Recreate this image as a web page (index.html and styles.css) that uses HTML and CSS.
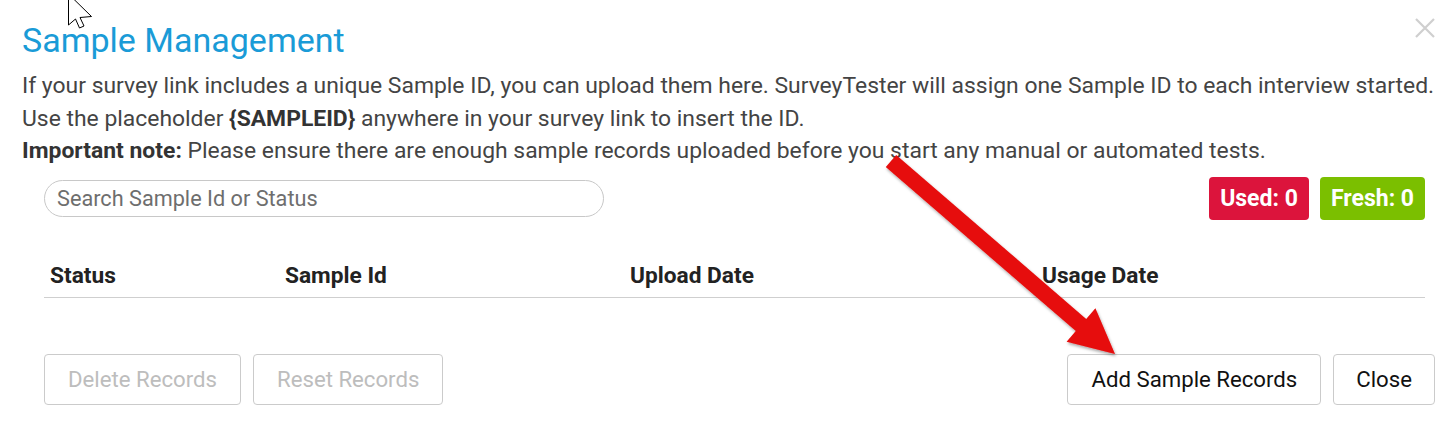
FILE: index.html
```html
<!DOCTYPE html>
<html lang="en">
<head>
<meta charset="utf-8">
<title>Sample Management</title>
<link rel="stylesheet" href="styles.css">
</head>
<body>
<div class="modal">
  <div class="modal-header">
    <h2 class="modal-title">Sample Management</h2>
    <button class="close-x" aria-label="Close">
      <svg width="20" height="20" viewBox="0 0 20 20"><path d="M1 1 L19 19 M19 1 L1 19" stroke="#cfcfcf" stroke-width="2.2" fill="none"/></svg>
    </button>
  </div>
  <div class="intro">
    <p>If your survey link includes a unique Sample ID, you can upload them here. SurveyTester will assign one Sample ID to each interview started.</p>
    <p>Use the placeholder <b>{SAMPLEID}</b> anywhere in your survey link to insert the ID.</p>
    <p><b>Important note:</b> Please ensure there are enough sample records uploaded before you start any manual or automated tests.</p>
  </div>
  <div class="content">
    <div class="toolbar">
      <input class="search" type="text" placeholder="Search Sample Id or Status">
      <div class="badges">
        <span class="badge used">Used: 0</span>
        <span class="badge fresh">Fresh: 0</span>
      </div>
    </div>
    <div class="table-head">
      <div class="col c1">Status</div>
      <div class="col c2">Sample Id</div>
      <div class="col c3">Upload Date</div>
      <div class="col c4">Usage Date</div>
    </div>
  </div>
  <div class="footer">
    <div class="btn-group">
      <button class="btn" disabled>Delete Records</button>
      <button class="btn" disabled>Reset Records</button>
    </div>
    <div class="btn-group">
      <button class="btn">Add Sample Records</button>
      <button class="btn btn-close">Close</button>
    </div>
  </div>
</div>
<svg class="arrow" width="1453" height="427" viewBox="0 0 1453 427">
  <defs>
    <filter id="sh" x="-10%" y="-10%" width="130%" height="130%">
      <feDropShadow dx="1" dy="2" stdDeviation="1.5" flood-color="#000" flood-opacity="0.35"/>
    </filter>
  </defs>
  <polygon filter="url(#sh)" fill="#e60a0a" points="885.8,167.1 896.2,154.9 1086.2,318.9 1095.4,308.3 1115,354 1066.6,341.7 1075.8,331.1"/>
</svg>
<svg class="cursor" width="30" height="40" viewBox="0 0 30 40">
  <polygon points="1.5,0 1.5,31 8.5,25 12.5,34 17,32 13,23.5 24.5,22.5" fill="#fff" stroke="#000" stroke-width="1" stroke-linejoin="miter"/>
</svg>
</body>
</html>
```

FILE: styles.css
```css
* { box-sizing: border-box; }
html, body { margin: 0; padding: 0; background: #fff; }
body {
  font-family: Roboto, "Noto Sans", "Liberation Sans", sans-serif;
  color: #444;
  width: 1453px;
  height: 427px;
  overflow: hidden;
  position: relative;
}
.modal {
  padding: 18px 18px 0 22px;
}
.modal-header {
  display: flex;
  justify-content: space-between;
  align-items: flex-start;
}
.modal-title {
  margin: 0;
  font-size: 34px;
  font-weight: 400;
  line-height: 44px;
  color: #1a9bd7;
}
.close-x {
  border: 0;
  background: none;
  padding: 0;
  margin-top: 0;
  width: 20px;
  height: 20px;
  cursor: pointer;
}
.intro {
  margin-top: 8px;
  font-size: 22.9px;
  line-height: 32.5px;
}
.intro p { margin: 0; }
.intro b { font-weight: 700; color: #333; }
.content {
  padding: 0 10px 0 22px;
}
.toolbar {
  display: flex;
  justify-content: space-between;
  align-items: center;
  margin-top: 9px;
}
.search {
  width: 560px;
  height: 37px;
  border: 1px solid #c8c8c8;
  border-radius: 19px;
  padding: 0 12px;
  font-family: inherit;
  font-size: 21.7px;
  color: #555;
  outline: none;
}
.search::placeholder { color: #6e6e6e; }
.badges { display: flex; gap: 11px; }
.badge {
  height: 43px;
  line-height: 43px;
  border-radius: 4px;
  color: #fff;
  font-weight: 700;
  font-size: 23px;
  text-align: center;
}
.badge.used { background: #dc143c; width: 100px; }
.badge.fresh { background: #7bbf00; width: 105px; }
.table-head {
  display: grid;
  grid-template-columns: 235px 345px 412px 1fr;
  margin-top: 44px;
  border-bottom: 1px solid #cfcfcf;
  font-size: 22.7px;
  font-weight: 700;
  color: #222;
  line-height: 24px;
  padding-bottom: 9px;
}
.col { padding-left: 6px; }
.footer {
  display: flex;
  justify-content: space-between;
  margin-top: 56px;
  padding-left: 22px;
}
.btn-group { display: flex; gap: 12px; }
.btn {
  height: 51px;
  padding: 0 23px;
  background: #fff;
  border: 1px solid #cbcbcb;
  border-radius: 4px;
  font-family: inherit;
  font-size: 22.2px;
  color: #111;
  cursor: pointer;
}
.btn-close { padding: 0 22px; }
.btn:disabled { color: #bdbdbd; cursor: default; }
.arrow {
  position: absolute;
  left: 0;
  top: 0;
  pointer-events: none;
}
.cursor {
  position: absolute;
  left: 67px;
  top: -6px;
  pointer-events: none;
}
```
